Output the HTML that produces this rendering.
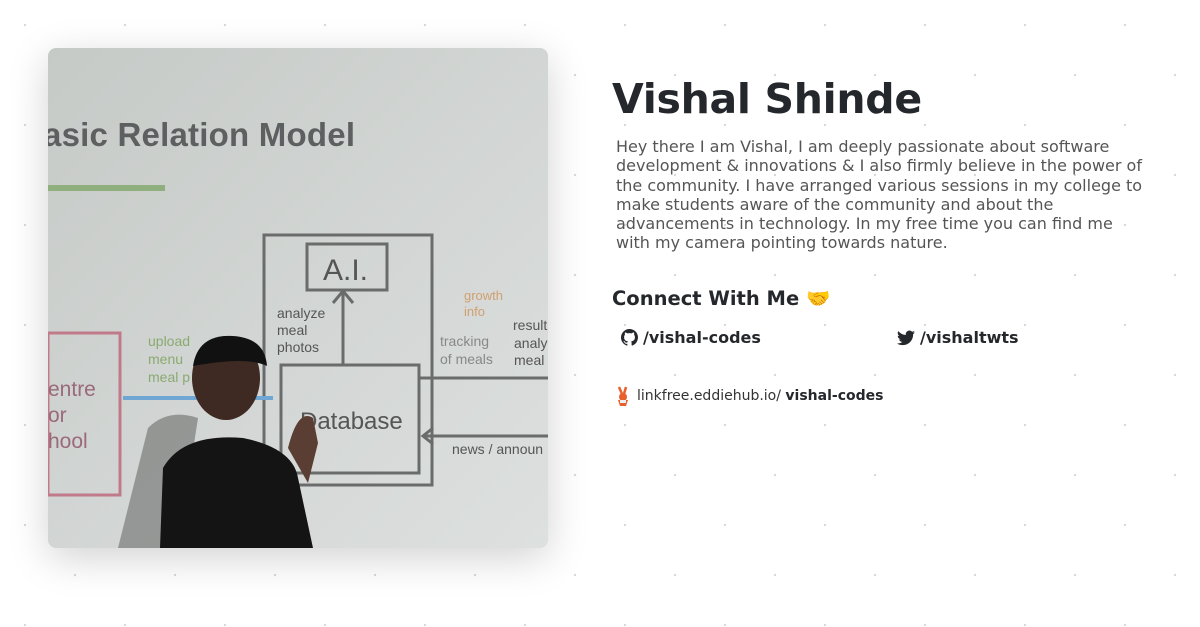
<!DOCTYPE html>
<html><head><meta charset="utf-8"><style>
body{margin:0;width:1200px;height:627px;overflow:hidden;background:#fff;
background-image:radial-gradient(circle at 25px 25px,#d4d4d4 0.8px,transparent 1.4px),radial-gradient(circle at 75px 75px,#d4d4d4 0.8px,transparent 1.4px);
background-size:100px 100px;font-family:"DejaVu Sans","Liberation Sans",sans-serif;position:relative}
.photo{position:absolute;left:48px;top:48px;width:500px;height:500px;border-radius:8px;overflow:hidden;box-shadow:0 10px 40px rgba(0,0,0,.18)}
h1{position:absolute;left:612px;top:75px;margin:0;font-size:41px;letter-spacing:-0.3px;font-weight:bold;color:#24272b}
.bio{position:absolute;left:616px;top:137px;width:528px;font-size:16px;line-height:19.3px;color:#555}
h2{position:absolute;left:612px;top:287px;margin:0;font-size:19.5px;font-weight:bold;color:#24272b}
.l{position:absolute;top:328px;font-size:16px;font-weight:bold;color:#24272b;display:flex;align-items:center;gap:5px}
.lf{position:absolute;left:614px;top:386px;font-size:14px;color:#333;display:flex;align-items:center;gap:5px}
</style></head><body>
<div class="photo"><svg width="500" height="500" viewBox="0 0 500 500">
<defs><linearGradient id="g" x1="0" y1="0" x2="1" y2="1"><stop offset="0" stop-color="#c6cac7"/><stop offset="1" stop-color="#dde0df"/></linearGradient></defs>
<rect width="500" height="500" fill="url(#g)"/>
<text x="-5" y="98" font-family="Liberation Sans" font-size="33" font-weight="bold" fill="#5d5f60" textLength="312">asic Relation Model</text>
<rect x="0" y="137" width="117" height="6" fill="#8fb07e"/>
<g fill="none" stroke="#6a6c6c" stroke-width="3">
<rect x="216" y="187" width="168" height="250"/><rect x="259" y="196" width="80" height="46"/>
<rect x="233" y="317" width="138" height="108"/><path d="M295 317V245M285 255l10-12 10 12"/>
<path d="M371 330h130M500 388H375M385 380l-10 8 10 8"/></g>
<rect x="0" y="285" width="72" height="162" fill="none" stroke="#c07a8a" stroke-width="3"/>
<path d="M75 350h150" stroke="#6fa6d4" stroke-width="4"/>
<g font-family="Liberation Sans" fill="#555"><text x="275" y="232" font-size="30">A.I.</text>
<text x="252" y="381" font-size="24">Database</text>
<text x="229" y="270" font-size="14">analyze</text><text x="229" y="287" font-size="14">meal</text><text x="229" y="304" font-size="14">photos</text>
<text x="392" y="298" font-size="14" fill="#888">tracking</text><text x="392" y="316" font-size="14" fill="#888">of meals</text>
<text x="465" y="282" font-size="14">result</text><text x="466" y="300" font-size="14">analy</text><text x="466" y="317" font-size="14">meal</text>
<text x="404" y="406" font-size="14">news / announ</text>
<text x="0" y="348" font-size="21" fill="#9a6a7a">entre</text><text x="0" y="374" font-size="21" fill="#9a6a7a">or</text><text x="0" y="400" font-size="21" fill="#9a6a7a">hool</text>
<text x="416" y="252" font-size="13" fill="#d0a070">growth</text><text x="416" y="268" font-size="13" fill="#d0a070">info</text>
<text x="100" y="298" font-size="14" fill="#8aaa70">upload</text><text x="100" y="316" font-size="14" fill="#8aaa70">menu</text><text x="100" y="334" font-size="14" fill="#8aaa70">meal p</text></g>
<path d="M100 380q20-20 50-10l-20 130H70z" fill="#6a6c6a" opacity=".6"/>
<path d="M115 420q20-35 80-30 50 10 55 40l15 70H112z" fill="#141414"/>
<ellipse cx="178" cy="330" rx="34" ry="42" fill="#3e2a22"/>
<path d="M145 318q5-32 40-30 32 2 34 30-20-10-74 0z" fill="#111"/>
<path d="M240 400q10-40 25-30l5 25-10 40z" fill="#5a3e33"/>
</svg></div>
<h1>Vishal Shinde</h1>
<div class="bio">Hey there I am Vishal, I am deeply passionate about software development &amp; innovations &amp; I also firmly believe in the power of the community. I have arranged various sessions in my college to make students aware of the community and about the advancements in technology. In my free time you can find me with my camera pointing towards nature.</div>
<h2>Connect With Me <span style="color:#f2b233">🤝</span></h2>
<div class="l" style="left:621px"><svg width="17" height="17" viewBox="0 0 16 16"><path fill="#24272b" d="M8 0C3.58 0 0 3.58 0 8c0 3.54 2.290 6.53 5.47 7.59.4.07.55-.17.55-.38v-1.34c-2.23.48-2.7-1.07-2.7-1.07-.36-.92-.89-1.170-.89-1.17-.73-.5.06-.49.06-.49.8.06 1.23.83 1.23.83.71 1.22 1.87.87 2.33.66.07-.52.28-.87.51-1.070-1.78-.2-3.64-.89-3.64-3.95 0-.87.31-1.59.82-2.15-.08-.2-.36-1.02.08-2.12 0 0 .67-.21 2.2.82A7.6 7.6 0 0 1 8 3.87c.68 0 1.36.09 2 .27 1.53-1.04 2.2-.82 2.2-.82.44 1.1.16 1.92.08 2.12.51.56.82 1.27.82 2.15 0 3.07-1.87 3.75-3.65 3.95.29.25.54.73.54 1.48v2.2c0 .21.15.46.55.38A8 8 0 0 0 16 8c0-4.42-3.58-8-8-8z"/></svg>/vishal-codes</div>
<div class="l" style="left:897px"><svg width="18" height="16" viewBox="0 0 24 20"><path fill="#24272b" d="M24 2.4a10 10 0 0 1-2.8.8A4.9 4.9 0 0 0 23.3.5a9.8 9.8 0 0 1-3.1 1.2A4.9 4.9 0 0 0 11.8 6 14 14 0 0 1 1.7.9a4.9 4.9 0 0 0 1.5 6.6A4.9 4.9 0 0 1 1 6.9a4.9 4.9 0 0 0 3.9 4.8 4.9 4.9 0 0 1-2.2.1 4.9 4.9 0 0 0 4.6 3.4A9.9 9.9 0 0 1 0 17.3 14 14 0 0 0 7.5 19.5c9.1 0 14-7.5 14-14v-.6A10 10 0 0 0 24 2.4z"/></svg>/vishaltwts</div>
<div class="lf"><svg width="18" height="20" viewBox="0 0 18 20"><path d="M5 1l3 7M12 1l-2 7" stroke="#e8602c" stroke-width="2.5"/><circle cx="9" cy="11" r="4" fill="#e8602c"/><path d="M4 14h10l-2 6H6z" fill="#e8602c"/><rect x="6" y="14" width="6" height="3" fill="#eee"/></svg><span>linkfree.eddiehub.io/ <b style="color:#24272b">vishal-codes</b></span></div>
</body></html>
